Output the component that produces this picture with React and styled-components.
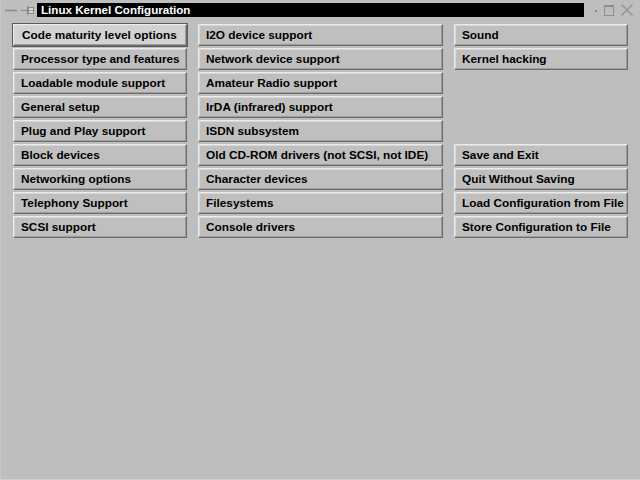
import React from "react";
import styled, { createGlobalStyle } from "styled-components";

const Global = createGlobalStyle`
  html, body { margin: 0; padding: 0; background: #bebebe; }
  body { font-family: "Liberation Sans", Arial, sans-serif; }
`;

const Window = styled.div`
  width: 640px;
  height: 480px;
  box-sizing: border-box;
  background: #bebebe;
  border-left: 1px solid #c8c8c8;
  border-bottom: 1px solid #cfcfcf;
  display: flex;
  flex-direction: column;
`;

const TitleBar = styled.div`
  height: 14px;
  margin-top: 3px;
  display: flex;
  align-items: center;
  padding-left: 3px;
  padding-right: 6px;
`;

const TitleText = styled.div`
  flex: 1;
  height: 14px;
  background: #000;
  color: #fff;
  font-weight: bold;
  font-size: 11.6px;
  line-height: 14px;
  padding-left: 4px;
  margin-left: 1px;
  margin-right: 6px;
  white-space: nowrap;
  overflow: hidden;
`;

const IconBox = styled.svg`
  display: block;
  flex: none;
`;

const Grid = styled.div`
  margin-top: 6px;
  padding-left: 11px;
  display: grid;
  grid-template-columns: 176px 247px 176px;
  grid-auto-rows: 24px;
  column-gap: 9px;
`;

const Button = styled.button`
  box-sizing: border-box;
  margin: 0;
  height: 24px;
  padding: 0;
  border: 1px solid ${(p) => (p.$focused ? "#5a5a5a" : "transparent")};
  background: transparent;
  font: inherit;
  display: block;
  text-align: left;
  grid-row: ${(p) => p.$row || "auto"};
  grid-column: ${(p) => p.$col || "auto"};
`;

const Face = styled.span`
  box-sizing: border-box;
  display: flex;
  align-items: center;
  height: 100%;
  padding-left: ${(p) => (p.$focused ? "8px" : "7px")};
  background: ${(p) => (p.$focused ? "#d2d2d2" : "#bfbfbf")};
  border-top: 1px solid #ececec;
  border-left: 1px solid #ececec;
  border-right: 1px solid #6c6c6c;
  border-bottom: 1px solid #6c6c6c;
  box-shadow: inset -1px -1px 0 #9c9c9c, inset 1px 1px 0 #d6d6d6;
  color: #000;
  font-family: "Liberation Sans", Arial, sans-serif;
  font-weight: bold;
  font-size: 11.8px;
  white-space: nowrap;
`;

const col1 = [
  "Code maturity level options",
  "Processor type and features",
  "Loadable module support",
  "General setup",
  "Plug and Play support",
  "Block devices",
  "Networking options",
  "Telephony Support",
  "SCSI support",
];
const col2 = [
  "I2O device support",
  "Network device support",
  "Amateur Radio support",
  "IrDA (infrared) support",
  "ISDN subsystem",
  "Old CD-ROM drivers (not SCSI, not IDE)",
  "Character devices",
  "Filesystems",
  "Console drivers",
];
const col3 = [
  ["Sound", 1],
  ["Kernel hacking", 2],
  ["Save and Exit", 6],
  ["Quit Without Saving", 7],
  ["Load Configuration from File", 8],
  ["Store Configuration to File", 9],
];

function Item({ label, row, col, focused }) {
  return (
    <Button $row={row} $col={col} $focused={focused}>
      <Face $focused={focused}>{label}</Face>
    </Button>
  );
}

export default function App() {
  return (
    <>
      <Global />
      <Window>
        <TitleBar>
          <IconBox width="14" height="14" viewBox="0 0 14 14">
            <line x1="1" y1="7.5" x2="13" y2="7.5" stroke="#8a8a8a" strokeWidth="1.5" />
          </IconBox>
          <IconBox width="16" height="14" viewBox="0 0 16 14" style={{ marginLeft: 2 }}>
            <line x1="1" y1="7.5" x2="7" y2="7.5" stroke="#8a8a8a" strokeWidth="1" />
            <line x1="7.5" y1="3" x2="7.5" y2="12" stroke="#8a8a8a" strokeWidth="1" />
            <rect x="8.5" y="4.5" width="5" height="6" fill="#d8d8d8" stroke="#8a8a8a" strokeWidth="1" />
            <line x1="9" y1="7.5" x2="13" y2="7.5" stroke="#a0a0a0" strokeWidth="1" />
          </IconBox>
          <TitleText>Linux Kernel Configuration</TitleText>
          <IconBox width="10" height="14" viewBox="0 0 10 14">
            <rect x="5" y="7" width="2" height="2" fill="#8a8a8a" />
          </IconBox>
          <IconBox width="14" height="14" viewBox="0 0 14 14" style={{ marginLeft: 2 }}>
            <rect x="2.5" y="2.5" width="9" height="10" fill="none" stroke="#8e8e8e" strokeWidth="1" />
            <line x1="3" y1="3.5" x2="11" y2="3.5" stroke="#8e8e8e" strokeWidth="1" />
          </IconBox>
          <IconBox width="14" height="14" viewBox="0 0 14 14" style={{ marginLeft: 4 }}>
            <path d="M1.5 1.5 L12.5 12.5 M12.5 1.5 L1.5 12.5" stroke="#8e8e8e" strokeWidth="1.2" />
          </IconBox>
        </TitleBar>
        <Grid>
          {col1.map((l, i) => (
            <Item key={l} label={l} row={i + 1} col={1} focused={i === 0} />
          ))}
          {col2.map((l, i) => (
            <Item key={l} label={l} row={i + 1} col={2} />
          ))}
          {col3.map(([l, r]) => (
            <Item key={l} label={l} row={r} col={3} />
          ))}
        </Grid>
      </Window>
    </>
  );
}
